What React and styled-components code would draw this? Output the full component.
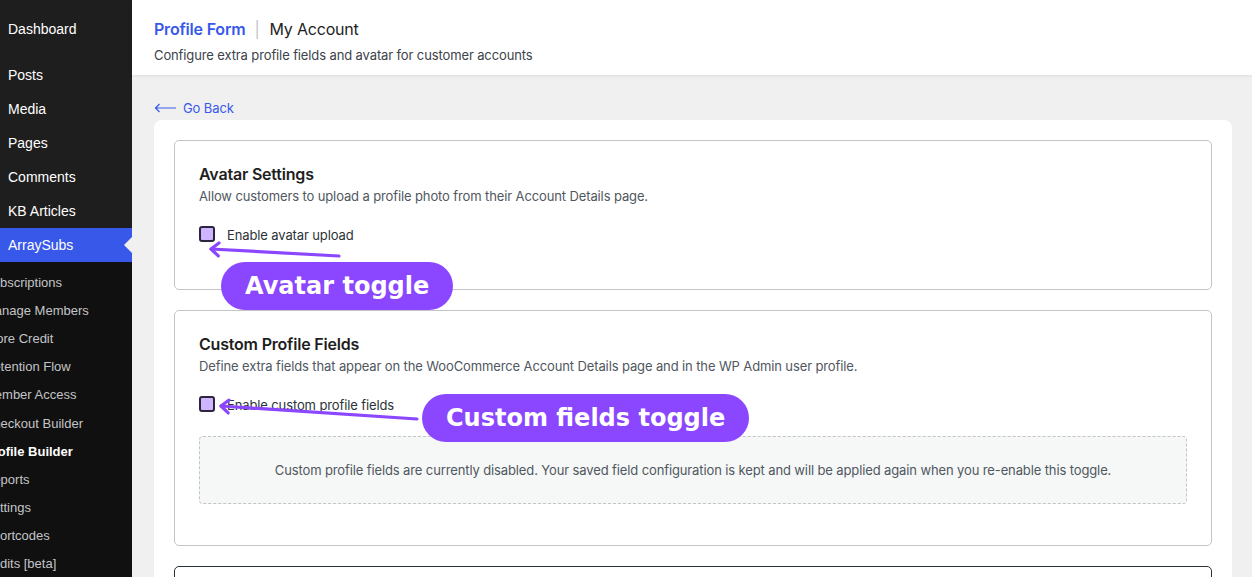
import React from "react";
import styled, { createGlobalStyle } from "styled-components";

const GlobalStyle = createGlobalStyle`
  html, body {
    margin: 0;
    padding: 0;
    background: #f0f0f1;
    overflow: hidden;
  }
  body {
    font-family: Inter, "Liberation Sans", Arial, sans-serif;
    -webkit-font-smoothing: antialiased;
  }
`;

const Page = styled.div`
  display: flex;
  min-height: 100vh;
`;

const Sidebar = styled.nav`
  width: 132px;
  flex-shrink: 0;
  background: #1e1e1e;
  display: flex;
  flex-direction: column;
  padding-top: 12px;
  overflow: hidden;
`;

const MenuItem = styled.div`
  position: relative;
  height: 34px;
  display: flex;
  align-items: center;
  padding-left: 8px;
  font-family: "Liberation Sans", Arial, sans-serif;
  font-size: 14px;
  color: #fff;
  background: ${(p) => (p.active ? "#3858e9" : "transparent")};
  margin-bottom: ${(p) => (p.gap ? "12px" : "0")};
`;

const Pointer = styled.span`
  position: absolute;
  right: 0;
  top: 50%;
  margin-top: -8px;
  width: 0;
  height: 0;
  border-top: 8px solid transparent;
  border-bottom: 8px solid transparent;
  border-right: 8px solid #f0f0f1;
`;

const SubMenu = styled.div`
  background: #101010;
  flex: 1;
  padding-top: 6px;
`;

const SubItem = styled.div`
  height: 28.2px;
  display: flex;
  align-items: center;
  margin-left: -16px;
  white-space: nowrap;
  font-family: "Liberation Sans", Arial, sans-serif;
  font-size: 13px;
  color: ${(p) => (p.current ? "#fff" : "#c3c4c7")};
  font-weight: ${(p) => (p.current ? 700 : 400)};
`;

const Main = styled.main`
  flex: 1;
  display: flex;
  flex-direction: column;
  min-width: 0;
`;

const Header = styled.header`
  background: #fff;
  height: 75px;
  box-sizing: border-box;
  padding: 19px 22px 0;
  box-shadow: 0 1px 3px rgba(0, 0, 0, 0.08);
`;

const TitleRow = styled.div`
  display: flex;
  align-items: center;
  font-size: 16px;
  line-height: 20px;
  letter-spacing: -0.2px;
`;

const Crumb = styled.span`
  color: #3858e9;
  font-weight: 600;
`;

const Divider = styled.span`
  color: #c3c4c7;
  margin: 0 10px 0 9px;
`;

const PageName = styled.span`
  color: #1e1e1e;
  font-weight: 400;
`;

const Subtitle = styled.p`
  margin: 7px 0 0;
  font-size: 13px;
  line-height: 18px;
  letter-spacing: -0.12px;
  color: #3c434a;
`;

const Content = styled.div`
  padding: 0 20px 0 22px;
`;

const BackLink = styled.a`
  display: inline-flex;
  align-items: center;
  gap: 6px;
  margin-top: 25px;
  height: 16px;
  font-size: 13px;
  letter-spacing: -0.1px;
  color: #3858e9;
  text-decoration: none;
`;

const Card = styled.div`
  margin-top: 3px;
  background: #fff;
  border-radius: 8px;
  padding: 20px;
  display: flex;
  flex-direction: column;
  gap: 20px;
  letter-spacing: -0.12px;
`;

const Section = styled.section`
  position: relative;
  border: 1px solid ${(p) => (p.focused ? "#2c3338" : "#c3c4c7")};
  border-radius: 5px;
  padding: ${(p) => p.pad || "23px 24px 46px"};
`;

const SectionTitle = styled.h3`
  margin: 0;
  font-size: 16px;
  line-height: 20px;
  font-weight: 600;
  letter-spacing: -0.2px;
  color: #1e1e1e;
`;

const SectionDesc = styled.p`
  margin: 3px 0 0;
  font-size: 13px;
  line-height: 18px;
  color: #50575e;
`;

const CheckRow = styled.label`
  display: flex;
  align-items: center;
  gap: 12px;
  margin-top: 22px;
  font-size: 13px;
  color: #2c3338;
`;

const Box = styled.span`
  width: 16px;
  height: 16px;
  box-sizing: border-box;
  border: 2px solid #2e2440;
  border-radius: 3px;
  background: #cdb6ff;
  margin-top: -2px;
`;

const Notice = styled.div`
  margin-top: 23px;
  height: 68px;
  box-sizing: border-box;
  border: 1px dashed #c3c4c7;
  border-radius: 4px;
  background: #f6f7f7;
  display: flex;
  align-items: center;
  justify-content: center;
  font-size: 13px;
  color: #50575e;
`;

const SaveButton = styled.div`
  width: 151px;
  height: 36px;
  background: #3858e9;
  border-radius: 3px;
`;

const Pill = styled.div`
  position: absolute;
  left: ${(p) => p.x}px;
  top: ${(p) => p.y}px;
  height: 48px;
  padding: 0 24px;
  border-radius: 24px;
  background: #8b46ff;
  color: #fff;
  display: flex;
  align-items: center;
  font-family: "DejaVu Sans", sans-serif;
  font-weight: 700;
  font-size: 24px;
  letter-spacing: 0;
  white-space: nowrap;
`;

const ArrowLayer = styled.svg`
  position: absolute;
  left: 0;
  top: 0;
  overflow: visible;
  pointer-events: none;
`;

const Arrow = ({ x1, y1, x2, y2 }) => {
  const a = Math.atan2(y1 - y2, x1 - x2);
  const len = 10;
  const w1 = [x2 + len * Math.cos(a + 0.7), y2 + len * Math.sin(a + 0.7)];
  const w2 = [x2 + len * Math.cos(a - 0.7), y2 + len * Math.sin(a - 0.7)];
  return (
    <ArrowLayer width="1" height="1">
      <g stroke="#8b46ff" strokeWidth="3.2" strokeLinecap="round" fill="none">
        <line x1={x1} y1={y1} x2={x2} y2={y2} />
        <polyline points={`${w1.join(",")} ${x2},${y2} ${w2.join(",")}`} strokeLinejoin="round" />
      </g>
    </ArrowLayer>
  );
};

const mainMenu = ["Dashboard", "Posts", "Media", "Pages", "Comments", "KB Articles"];
const subMenu = [
  "Subscriptions",
  "Manage Members",
  "Store Credit",
  "Retention Flow",
  "Member Access",
  "Checkout Builder",
  "Profile Builder",
  "Reports",
  "Settings",
  "Shortcodes",
  "Audits [beta]",
];

export default function App() {
  return (
    <Page>
      <GlobalStyle />
      <Sidebar>
        {mainMenu.map((m, i) => (
          <MenuItem key={m} gap={i === 0}>
            {m}
          </MenuItem>
        ))}
        <MenuItem active>
          ArraySubs
          <Pointer />
        </MenuItem>
        <SubMenu>
          {subMenu.map((s) => (
            <SubItem key={s} current={s === "Profile Builder"}>
              {s}
            </SubItem>
          ))}
        </SubMenu>
      </Sidebar>

      <Main>
        <Header>
          <TitleRow>
            <Crumb>Profile Form</Crumb>
            <Divider>|</Divider>
            <PageName>My Account</PageName>
          </TitleRow>
          <Subtitle>Configure extra profile fields and avatar for customer accounts</Subtitle>
        </Header>

        <Content>
          <BackLink href="#">
            <svg width="23" height="10" viewBox="0 0 23 10">
              <path d="M22 5H1.5M5.5 1L1.5 5l4 4" stroke="#3858e9" strokeWidth="1.2" fill="none" />
            </svg>
            Go Back
          </BackLink>

          <Card>
            <Section>
              <SectionTitle>Avatar Settings</SectionTitle>
              <SectionDesc>Allow customers to upload a profile photo from their Account Details page.</SectionDesc>
              <CheckRow>
                <Box />
                Enable avatar upload
              </CheckRow>
              <Arrow x1={164} y1={115} x2={36} y2={108} />
              <Pill x={46} y={121}>Avatar toggle</Pill>
            </Section>

            <Section pad="23px 24px 41px">
              <SectionTitle>Custom Profile Fields</SectionTitle>
              <SectionDesc>
                Define extra fields that appear on the WooCommerce Account Details page and in the WP Admin user profile.
              </SectionDesc>
              <CheckRow>
                <Box />
                Enable custom profile fields
              </CheckRow>
              <Notice>
                Custom profile fields are currently disabled. Your saved field configuration is kept and will be applied
                again when you re-enable this toggle.
              </Notice>
              <Arrow x1={242} y1={108} x2={46} y2={95} />
              <Pill x={247} y={83}>Custom fields toggle</Pill>
            </Section>

            <Section focused pad="10px 20px 20px">
              <SaveButton />
            </Section>
          </Card>
        </Content>
      </Main>
    </Page>
  );
}
